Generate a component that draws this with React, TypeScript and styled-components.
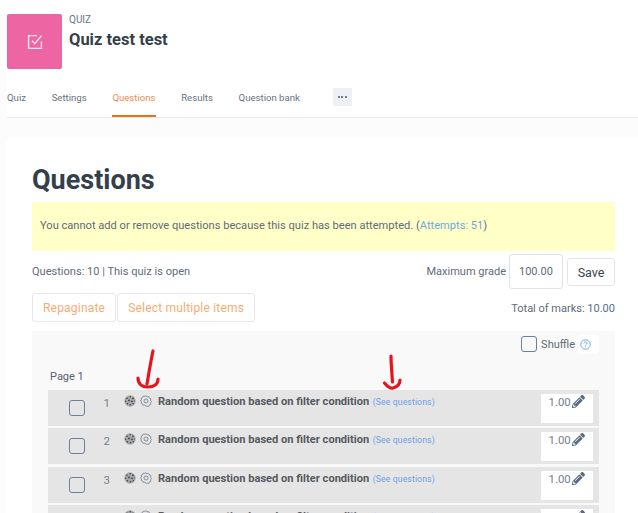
import React, { FC } from 'react';
import styled, { createGlobalStyle } from 'styled-components';
import { FaPencilAlt } from 'react-icons/fa';

const GlobalStyle = createGlobalStyle`
	html, body {
		margin: 0;
		padding: 0;
		background: #fff;
	}
	body {
		font-family: Roboto, "Liberation Sans", sans-serif;
		color: #5f6b7a;
	}
`;

const Page = styled.div`
	position: relative;
	width: 638px;
	height: 513px;
	overflow: hidden;
	background: #fcfcfc;
`;

const Header = styled.header`
	display: flex;
	gap: 7px;
	height: 69px;
	padding: 14px 0 0 7px;
	box-sizing: border-box;
	background: #fff;
`;

const Tile = styled.div`
	display: flex;
	align-items: center;
	justify-content: center;
	width: 55px;
	height: 55px;
	border-radius: 2px;
	background: #ee65a3;
`;

const HeaderText = styled.div`
	display: flex;
	flex-direction: column;
`;

const Overline = styled.span`
	font-size: 10px;
	line-height: 12px;
	color: #6a7380;
`;

const CourseTitle = styled.h1`
	margin: 4px 0 0;
	font-size: 16.5px;
	line-height: 19px;
	font-weight: 700;
	color: #343f4b;
`;

const Tabs = styled.nav`
	display: flex;
	align-items: flex-start;
	gap: 25.7px;
	height: 49px;
	margin-left: 7px;
	padding-top: 19px;
	box-sizing: border-box;
	background: #fff;
	border-bottom: 1px solid #e6e8ec;
`;

const Tab = styled.a<{ $active?: boolean }>`
	display: block;
	height: 29px;
	box-sizing: border-box;
	padding-top: 4px;
	font-size: 9.6px;
	line-height: 12px;
	color: ${props => (props.$active ? '#ee8a50' : '#6a7380')};
	border-bottom: 2px solid ${props => (props.$active ? '#e8730f' : 'transparent')};
`;

const MoreButton = styled.button`
	display: flex;
	align-items: center;
	justify-content: center;
	gap: 1.5px;
	width: 19px;
	height: 18px;
	margin: 0 0 0 7px;
	padding: 0;
	border: 0;
	background: #edf0f5;
`;

const Dot = styled.i`
	width: 2px;
	height: 2px;
	border-radius: 50%;
	background: #4c5663;
`;

const Card = styled.main`
	margin: 19px 0 0 6px;
	padding: 24px 23px 0 26px;
	height: 376px;
	box-sizing: border-box;
	background: #fff;
	border-radius: 6px 0 0 0;
`;

const Heading = styled.h2`
	margin: 0;
	font-size: 27px;
	line-height: 38px;
	font-weight: 700;
	color: #343f4b;
`;

const Notice = styled.div`
	display: flex;
	align-items: center;
	height: 49px;
	margin-top: 3px;
	padding: 0 0 2px 8px;
	box-sizing: border-box;
	font-size: 11.1px;
	color: #5f6b7a;
	background: #ffffc8;
`;

const NoticeLink = styled.a`
	color: #6fa8e0;
`;

const InfoRow = styled.div`
	display: flex;
	align-items: flex-start;
	justify-content: space-between;
	height: 39px;
	margin-top: 3px;
	font-size: 11.05px;
`;

const InfoText = styled.span`
	margin-top: 11px;
	line-height: 13px;
`;

const GradeForm = styled.div`
	display: flex;
	align-items: flex-start;
	gap: 3px;
`;

const GradeLabel = styled.span`
	margin: 11px 0 0;
	line-height: 14px;
	font-size: 11px;
`;

const GradeInput = styled.div`
	width: 54px;
	height: 35px;
	box-sizing: border-box;
	padding: 10px 0 0 9px;
	font-size: 11px;
	line-height: 14px;
	border: 1px solid #dfe2e6;
	border-radius: 3px;
	background: #fff;
`;

const SaveButton = styled.button`
	width: 48px;
	height: 28px;
	margin: 4px 0 0 1px;
	padding: 0;
	font-family: inherit;
	font-size: 12.5px;
	color: #3a4450;
	background: #fff;
	border: 1px solid #e4e6ea;
	border-radius: 3px;
`;

const ActionRow = styled.div`
	display: flex;
	align-items: flex-start;
	justify-content: space-between;
	height: 38px;
`;

const ActionGroup = styled.div`
	display: flex;
	gap: 1px;
`;

const ActionButton = styled.button`
	height: 29px;
	padding: 0 10px;
	font-family: inherit;
	font-size: 12px;
	letter-spacing: 0.2px;
	color: #f5ac73;
	background: #fff;
	border: 1px solid #e6e8ec;
	border-radius: 3px;
`;

const TotalMarks = styled.span`
	margin-top: 9px;
	font-size: 11px;
	line-height: 13px;
`;

const TotalValue = styled.span`
	color: #4f6f92;
`;

const Section = styled.section`
	padding: 5px 16px 0;
	background: #f9f9f9;
	height: 200px;
`;

const ShuffleRow = styled.div`
	display: flex;
	align-items: center;
	justify-content: flex-end;
	height: 16px;
	font-size: 11px;
`;

const ShuffleLabel = styled.span`
	margin-left: 4px;
`;

const HelpBadge = styled.span`
	display: flex;
	align-items: center;
	width: 21px;
	height: 19px;
	margin-left: 3px;
	padding-left: 2px;
	box-sizing: border-box;
	background: #fff;
	border-radius: 3px;
`;

const CheckBox = styled.span<{ $size: number }>`
	display: block;
	width: ${props => props.$size}px;
	height: ${props => props.$size}px;
	box-sizing: border-box;
	border: 1px solid #6d7f9c;
	border-radius: 3px;
`;

const PageLabel = styled.div`
	margin: 18px 0 0 2px;
	font-size: 11px;
	line-height: 13px;
	color: #56616e;
`;

const RowList = styled.div`
	display: flex;
	flex-direction: column;
	gap: 2.4px;
	margin-top: 7px;
`;

const Row = styled.div`
	display: flex;
	align-items: flex-start;
	height: 36px;
	box-sizing: border-box;
	padding-left: 21px;
	background: #e5e5e5;
`;

const RowCheck = styled.div`
	margin-top: 10px;
	width: 16px;
`;

const RowNumber = styled.span`
	width: 25px;
	margin-top: 6px;
	text-align: right;
	font-size: 11.5px;
	line-height: 14px;
	color: #76808c;
`;

const RowIcons = styled.div`
	display: flex;
	align-items: center;
	gap: 4px;
	margin: 5px 0 0 14px;
`;

const RowTitle = styled.strong`
	margin: 5px 0 0 6px;
	font-size: 11.1px;
	line-height: 14px;
	font-weight: 700;
	color: #56595e;
	white-space: nowrap;
`;

const SeeLink = styled.a`
	margin: 6px 0 0 3.5px;
	font-size: 8.7px;
	line-height: 12px;
	letter-spacing: 0.1px;
	color: #6fa0e6;
	white-space: nowrap;
`;

const MarkBox = styled.div`
	display: flex;
	align-items: flex-start;
	gap: 1px;
	width: 52px;
	height: 29px;
	margin: 4px 6.5px 0 auto;
	padding: 1px 0 0 8px;
	box-sizing: border-box;
	background: #fff;
	font-size: 11.4px;
	line-height: 14px;
	color: #76808c;
`;

const MarkPencil = styled(FaPencilAlt)`
	width: 13px;
	height: 13px;
	color: #5a6a80;
`;

const Annotation = styled.svg<{ $left: number; $top: number }>`
	position: absolute;
	left: ${props => props.$left}px;
	top: ${props => props.$top}px;
`;

const RandomIcon: FC = () => (
	<svg width="12" height="12" viewBox="0 0 12 12">
		<circle cx="6" cy="6" r="5.7" fill="#a6a8aa" />
		<g fill="#3a3e43">
			<circle cx="3" cy="3.2" r="0.8" />
			<circle cx="6.2" cy="1.8" r="0.7" />
			<circle cx="9" cy="3.4" r="0.8" />
			<circle cx="1.7" cy="6.2" r="0.7" />
			<circle cx="5" cy="5.4" r="0.9" />
			<circle cx="8" cy="6.4" r="0.8" />
			<circle cx="10.3" cy="6" r="0.5" />
			<circle cx="3.4" cy="8.8" r="0.8" />
			<circle cx="6.4" cy="9.8" r="0.8" />
			<circle cx="9.2" cy="8.8" r="0.7" />
		</g>
	</svg>
);

const GearIcon: FC = () => (
	<svg width="12" height="12" viewBox="0 0 12 12" fill="none" stroke="#7d8796" strokeWidth="0.9">
		<path d="M6 .8l1.2 1 1.6-.2.6 1.5 1.5.7-.3 1.6.9 1.1-.9 1.1.3 1.6-1.5.7-.6 1.5-1.6-.2L6 11.2l-1.2-1-1.6.2-.6-1.5-1.5-.7.3-1.6L.5 6l.9-1.1-.3-1.6 1.5-.7.6-1.5 1.6.2z" />
		<circle cx="6" cy="6" r="2" />
	</svg>
);

const questions = [1, 2, 3, 4];

const App: FC = () => {
	return <Page>
		<GlobalStyle />
		<Header>
			<Tile>
				<svg width="16" height="16" viewBox="0 0 16 16" fill="none" stroke="#fff" strokeOpacity="0.85" strokeWidth="1.4">
					<path d="M10 1.6H1.6v12.8h12.8V7.5" />
					<path d="M5 6.8l2.8 3L14.4 1.8" />
				</svg>
			</Tile>
			<HeaderText>
				<Overline>QUIZ</Overline>
				<CourseTitle>Quiz test test</CourseTitle>
			</HeaderText>
		</Header>
		<Tabs>
			<Tab>Quiz</Tab>
			<Tab>Settings</Tab>
			<Tab $active>Questions</Tab>
			<Tab>Results</Tab>
			<Tab>Question bank</Tab>
			<MoreButton><Dot /><Dot /><Dot /></MoreButton>
		</Tabs>
		<Card>
			<Heading>Questions</Heading>
			<Notice>
				<span>You cannot add or remove questions because this quiz has been attempted. (<NoticeLink>Attempts: 51</NoticeLink>)</span>
			</Notice>
			<InfoRow>
				<InfoText>Questions: 10 | This quiz is open</InfoText>
				<GradeForm>
					<GradeLabel>Maximum grade</GradeLabel>
					<GradeInput>100.00</GradeInput>
					<SaveButton>Save</SaveButton>
				</GradeForm>
			</InfoRow>
			<ActionRow>
				<ActionGroup>
					<ActionButton>Repaginate</ActionButton>
					<ActionButton>Select multiple items</ActionButton>
				</ActionGroup>
				<TotalMarks>Total of marks: <TotalValue>10.00</TotalValue></TotalMarks>
			</ActionRow>
			<Section>
				<ShuffleRow>
					<CheckBox $size={16} />
					<ShuffleLabel>Shuffle</ShuffleLabel>
					<HelpBadge>
						<svg width="11" height="11" viewBox="0 0 11 11" fill="none" stroke="#5ba4cf" strokeWidth="0.9">
							<circle cx="5.5" cy="5.5" r="4.7" />
							<path d="M4 4.3c0-2 3-2 3 0 0 1.1-1.5 1.1-1.5 2.2M5.5 7.4v.9" />
						</svg>
					</HelpBadge>
				</ShuffleRow>
				<PageLabel>Page 1</PageLabel>
				<RowList>
					{questions.map(number => (
						<Row key={number}>
							<RowCheck><CheckBox $size={16} /></RowCheck>
							<RowNumber>{number}</RowNumber>
							<RowIcons><RandomIcon /><GearIcon /></RowIcons>
							<RowTitle>Random question based on filter condition</RowTitle>
							<SeeLink>(See questions)</SeeLink>
							<MarkBox>1.00<MarkPencil /></MarkBox>
						</Row>
					))}
				</RowList>
			</Section>
		</Card>
		<Annotation $left={134} $top={348} width="28" height="44" viewBox="0 0 28 44" fill="none" stroke="#e8141c" strokeWidth="3.2" strokeLinecap="round">
			<path d="M19 3C17 12 15 24 13 36" />
			<path d="M4 30C4 38 11 39 14 39C20 39 24 36 24 31" />
		</Annotation>
		<Annotation $left={381} $top={352} width="24" height="42" viewBox="0 0 24 42" fill="none" stroke="#e8141c" strokeWidth="3.2" strokeLinecap="round">
			<path d="M10 4C10 12 11 22 11.5 30" />
			<path d="M3.5 31C6 34 9 37 12 36C16 35 19 32 19 28" />
		</Annotation>
	</Page>;
};

export default App;
